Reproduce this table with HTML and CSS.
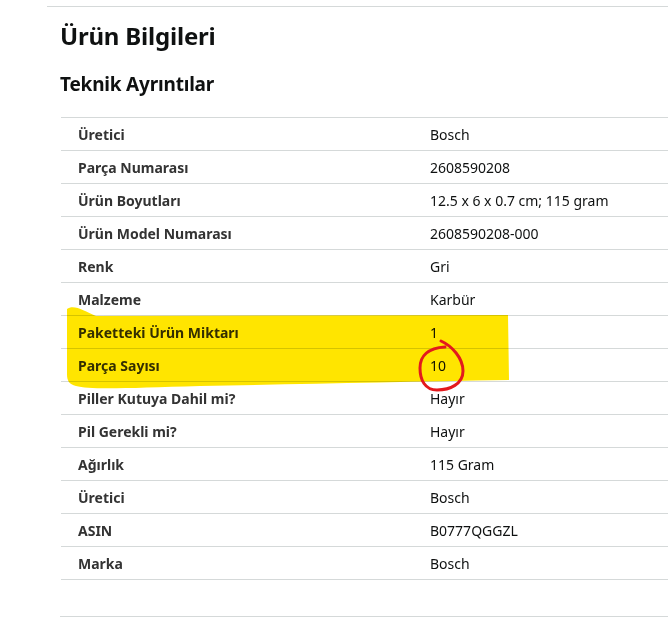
FILE: index.html
```html
<!DOCTYPE html>
<html lang="tr">
<head>
    <meta charset="UTF-8">
    <title>Ürün Bilgileri</title>
    <link rel="stylesheet" href="styles.css">
</head>
<body>

<div class="page">
    <div class="section">
        <h1>Ürün Bilgileri</h1>
        <h2>Teknik Ayrıntılar</h2>

        <!-- Teknik tablo -->
        <div class="spec-table">
            <div class="spec-row"><div class="label">Üretici</div><div class="value">Bosch</div></div>
            <div class="spec-row"><div class="label">Parça Numarası</div><div class="value">2608590208</div></div>
            <div class="spec-row"><div class="label">Ürün Boyutları</div><div class="value">12.5 x 6 x 0.7 cm; 115 gram</div></div>
            <div class="spec-row"><div class="label">Ürün Model Numarası</div><div class="value">2608590208-000</div></div>
            <div class="spec-row"><div class="label">Renk</div><div class="value">Gri</div></div>
            <div class="spec-row"><div class="label">Malzeme</div><div class="value">Karbür</div></div>
            <div class="spec-row"><div class="label">Paketteki Ürün Miktarı</div><div class="value">1</div></div>
            <div class="spec-row"><div class="label">Parça Sayısı</div><div class="value">10</div></div>
            <div class="spec-row"><div class="label">Piller Kutuya Dahil mi?</div><div class="value">Hayır</div></div>
            <div class="spec-row"><div class="label">Pil Gerekli mi?</div><div class="value">Hayır</div></div>
            <div class="spec-row"><div class="label">Ağırlık</div><div class="value">115 Gram</div></div>
            <div class="spec-row"><div class="label">Üretici</div><div class="value">Bosch</div></div>
            <div class="spec-row"><div class="label">ASIN</div><div class="value">B0777QGGZL</div></div>
            <div class="spec-row"><div class="label">Marka</div><div class="value">Bosch</div></div>
        </div>

        <div class="section-end"></div>
    </div>

    <!-- Fosforlu kalem ve kırmızı daire -->
    <svg class="marks" width="668" height="621" viewBox="0 0 668 621">
        <path class="highlight" d="M67,309 C74,304 84,311 96,316 L508,315 L509,380 C400,382 300,384 200,386 C130,388 90,390 76,386 C69,384 67,381 67,374 Z"/>
        <path class="circle" d="M441,341 C452,346 463,358 463,371 C463,384 450,390 437,390 C425,390 420,380 420,368 C420,356 428,348 445,347"/>
    </svg>
</div>

</body>
</html>
```

FILE: styles.css
```css
/* General styles */
body {
    margin: 0;
    padding: 0;
    background-color: #fff;
    font-family: "Noto Sans", Arial, sans-serif;
    color: #0f1111;
}

.page {
    position: relative;
    width: 668px;
    height: 621px;
    overflow: hidden;
}

.section {
    margin: 6px 0 0 47px;
    border-top: 1px solid #d5d9d9;
    padding-left: 13px;
}

h1 {
    font-size: 24px;
    font-weight: 700;
    line-height: 32px;
    margin: 13px 0 0 0;
    letter-spacing: -0.2px;
}

h2 {
    font-size: 19px;
    font-weight: 700;
    line-height: 28px;
    margin: 18px 0 0 0;
    letter-spacing: -0.2px;
}

/* Table */
.spec-table {
    margin: 19px 0 0 1px;
    border-bottom: 1px solid #d5d9d9;
}

.spec-row {
    display: grid;
    grid-template-columns: 352px 1fr;
    border-top: 1px solid #d5d9d9;
    height: 32px;
    align-items: center;
    font-size: 14px;
}

.spec-row .label {
    padding-left: 17px;
    font-weight: 700;
    color: #333;
}

.spec-row .value {
    padding-left: 17px;
}

.section-end {
    margin-top: 36px;
    border-top: 1px solid #d5d9d9;
}

/* Overlay marks */
.marks {
    position: absolute;
    left: 0;
    top: 0;
    pointer-events: none;
}

.highlight {
    fill: #ffe500;
    mix-blend-mode: multiply;
}

.circle {
    fill: none;
    stroke: #e3191d;
    stroke-width: 3;
    stroke-linecap: round;
}
```
